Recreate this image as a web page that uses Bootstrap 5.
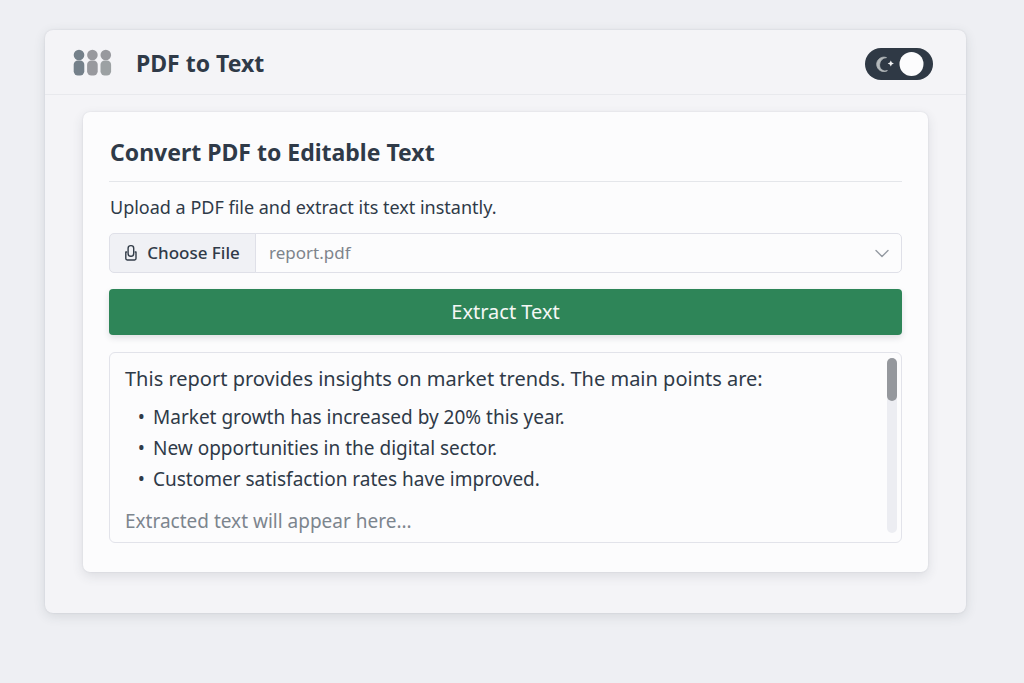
<!DOCTYPE html>
<html lang="en">
<head>
<meta charset="utf-8">
<meta name="viewport" content="width=device-width, initial-scale=1">
<title>PDF to Text</title>
<link href="https://cdn.jsdelivr.net/npm/bootstrap@5.3.0/dist/css/bootstrap.min.css" rel="stylesheet">
<style>
  body { background: #eeeff3; color: #2f3a48; font-family: "Noto Sans", sans-serif; font-size: 18px; line-height: 24px; }
  .page { padding: 30px 58px 32px 45px; }
  .shell { background: #f4f4f7; border-radius: 8px; padding-bottom: 41px; box-shadow: 0 3px 12px rgba(47,58,72,.13), 0 0 2px rgba(47,58,72,.12); }
  .topbar { height: 65px; padding: 3px 33px 0 28px; border-bottom: 1px solid #e8e9ed; }
  .title { font-size: 23px; line-height: 28px; font-weight: 700; }
  .topbar .title { padding-bottom: 2px; }
  .topbar svg { margin-bottom: 1px; }
  .panel { background: #fcfcfd; border-radius: 7px; margin: 17px 38px 0; padding: 24px 26px 29px; box-shadow: 0 4px 12px rgba(47,58,72,.12), 0 0 2px rgba(47,58,72,.12); }
  .panel-title { padding: 2px 1px 15px; border-bottom: 1px solid #e4e6ea; }
  .intro { padding: 13px 1px 14px; }
  .theme-switch .form-check-input { width: 68px; height: 32px; margin: 0; border: 0; border-radius: 16px; background: #2f3945; box-shadow: none; cursor: pointer; }
  .theme-switch svg { left: 0; top: 0; pointer-events: none; }
  .file-row { height: 40px; }
  .file-row .btn, .file-row .form-select { border: 1px solid #dfe0e8; border-radius: 5px; font-size: 17px; line-height: 24px; }
  .file-row .btn { width: 147px; background: #f0f1f5; color: #2f3a48; font-weight: 500; padding: 0 2px 0 0; }
  .file-row .form-select { color: #7e848c; background-color: #fcfcfd; padding: 0 40px 0 13px; background-size: 18px 18px; background-position: right 10px center;
    background-image: url("data:image/svg+xml,%3Csvg xmlns='http://www.w3.org/2000/svg' viewBox='0 0 18 18' fill='none' stroke='%23949aa2' stroke-width='1.4' stroke-linecap='round' stroke-linejoin='round'%3E%3Cpath d='M3 6.5l6 6 6-6'/%3E%3C/svg%3E"); }
  .btn-extract { height: 46px; background: #2e8558; color: #f4f7f5; border: 0; border-radius: 4px; font-size: 20px; box-shadow: 0 3px 6px rgba(47,58,72,.14); }
  .btn-extract:hover { background: #27734c; color: #fff; }
  .output { margin-top: 17px; border: 1px solid #e2e3ea; border-radius: 6px; padding: 5px 4px 9px 15px; font-size: 19px; }
  .summary { font-size: 20px; padding: 9px 0 11px; }
  .output ul { padding-left: 28px; margin: 0 0 14px; line-height: 31px; }
  .output li::marker { content: "•\00a0\2009"; }
  .scroll-track { width: 10px; border-radius: 5px; background: #ecedf2; }
  .scroll-thumb { height: 43px; border-radius: 5px; background: #95989d; }
  .hint { color: #7c858e; }
</style>
</head>
<body>
<main class="page">
  <div class="shell">
    <header class="topbar d-flex align-items-center justify-content-between">
      <div class="d-flex align-items-center">
        <svg class="me-4" width="39" height="28" viewBox="0 0 39 28" aria-hidden="true">
          <g fill="#74808a"><circle cx="6" cy="6" r="5.3"/><rect x=".7" y="11.5" width="10.6" height="15" rx="4.2"/></g>
          <g fill="#98999e"><circle cx="19.4" cy="6" r="5.3"/><rect x="14.1" y="11.5" width="10.6" height="15" rx="4.2"/><circle cx="32.8" cy="6" r="5.3"/></g>
          <rect x="27.5" y="11.5" width="10.6" height="15" rx="4.2" fill="#9ca1a3"/>
        </svg>
        <h1 class="title mb-0">PDF to Text</h1>
      </div>
      <label class="theme-switch position-relative d-flex">
        <input class="form-check-input" type="checkbox" role="switch" aria-label="Dark mode" checked>
        <svg class="position-absolute" width="68" height="32" viewBox="0 0 68 32" aria-hidden="true">
          <circle cx="46.5" cy="16" r="12" fill="#fcfcfd"/>
          <path d="M21.5 9.6A7.2 7.2 0 1 0 22.4 22.6A5.8 5.8 0 0 1 14.6 16.6A7.2 7.2 0 0 1 21.5 9.6Z" fill="#b4b9bb" stroke="#b4b9bb" stroke-width=".8" stroke-linejoin="round"/>
          <path d="M25.8 12.5L26.8 14.6L28.9 15.5L26.8 16.4L25.8 18.6L24.8 16.4L22.7 15.5L24.8 14.6Z" fill="#f2f3f4"/>
        </svg>
      </label>
    </header>
    <section class="panel">
      <h2 class="title panel-title mb-0">Convert PDF to Editable Text</h2>
      <p class="intro mb-0">Upload a PDF file and extract its text instantly.</p>
      <form>
        <div class="file-row input-group mb-3">
          <button class="btn d-flex align-items-center justify-content-center gap-2" type="button">
            <svg width="16" height="18" viewBox="0 0 16 18" fill="none" stroke="#333d49" stroke-width="1.4" stroke-linecap="round" stroke-linejoin="round" aria-hidden="true"><path d="M3.6 8H2.8V14.6Q2.8 16 4.2 16H11.6Q13 16 13 14.6V8H12.2"/><rect x="5.1" y="1.6" width="5.6" height="10.6" rx="2.6"/></svg>
            Choose File
          </button>
          <select class="form-select" aria-label="Selected file"><option>report.pdf</option></select>
        </div>
        <button class="btn btn-extract w-100 d-block" type="button">Extract Text</button>
      </form>
      <div class="output d-flex">
        <div class="flex-grow-1">
          <p class="summary mb-0">This report provides insights on market trends. The main points are:</p>
          <ul>
            <li>Market growth has increased by 20% this year.</li>
            <li>New opportunities in the digital sector.</li>
            <li>Customer satisfaction rates have improved.</li>
          </ul>
          <p class="hint mb-0">Extracted text will appear here...</p>
        </div>
        <div class="scroll-track"><div class="scroll-thumb"></div></div>
      </div>
    </section>
  </div>
</main>
<script src="https://cdn.jsdelivr.net/npm/bootstrap@5.3.0/dist/js/bootstrap.bundle.min.js"></script>
</body>
</html>
